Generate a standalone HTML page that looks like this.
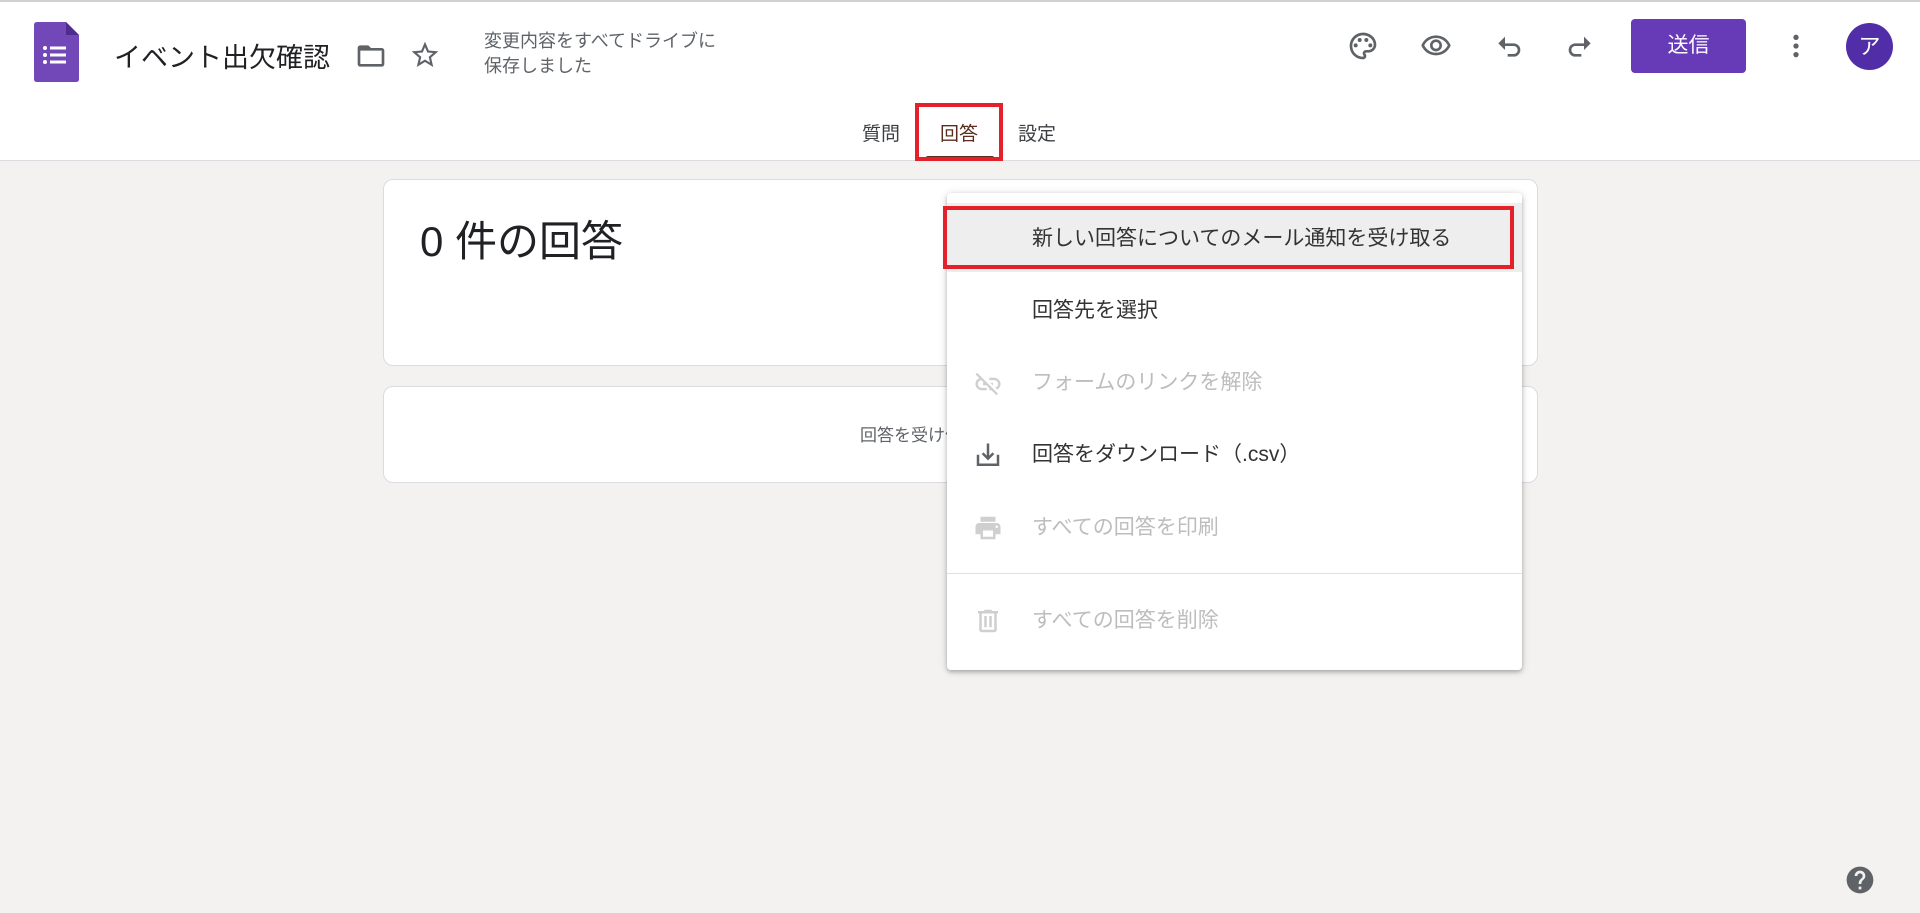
<!DOCTYPE html>
<html><head><meta charset="utf-8">
<style>
*{margin:0;padding:0;box-sizing:border-box}
body{width:1920px;height:913px;background:#f3f2f1;font-family:"Liberation Sans","Noto Sans CJK JP",sans-serif;position:relative;overflow:hidden;color:#202124}
.hdr{position:absolute;left:0;top:0;width:1920px;height:161px;background:#fff;border-top:2px solid #d0d0d0;border-bottom:1px solid #dadce0}
.abs{position:absolute}
.ic{position:absolute;fill:#5f6368}
.card{position:absolute;background:#fff;border:1px solid #dadce0;border-radius:10px}
.menu{position:absolute;left:947px;top:193px;width:575px;height:477px;background:#fff;border-radius:4px;box-shadow:0 2px 4px rgba(0,0,0,.25),0 1px 10px rgba(0,0,0,.12)}
.mi{position:absolute;left:85px;font-size:21px;line-height:28px;color:#333}
.dis{color:#bdbdbd}
</style></head><body>
<div class="hdr"></div>
<svg class="abs" style="left:34px;top:22px" width="45" height="60" viewBox="0 0 45 60"><path d="M3 0H32L45 13V57Q45 60 42 60H3Q0 60 0 57V3Q0 0 3 0Z" fill="#7248b9"/><path d="M32 0L45 13H32Z" fill="#4e2b8f"/><g fill="#fff"><circle cx="11" cy="26" r="2"/><circle cx="11" cy="33" r="2"/><circle cx="11" cy="40" r="2"/><rect x="16" y="24.5" width="16" height="3"/><rect x="16" y="31.5" width="16" height="3"/><rect x="16" y="38.5" width="16" height="3"/></g></svg>
<div class="abs" style="left:114px;top:36px;font-size:27px;color:#202124">イベント出欠確認</div>
<svg class="ic" style="left:355px;top:40px" width="32" height="32" viewBox="0 0 24 24"><path d="M20 6h-8l-2-2H4c-1.1 0-2 .9-2 2v12c0 1.1.9 2 2 2h16c1.1 0 2-.9 2-2V8c0-1.1-.9-2-2-2zm0 12H4V8h16v10z"/></svg>
<svg class="ic" style="left:409px;top:39px" width="32" height="32" viewBox="0 0 24 24"><path d="M22 9.24l-7.19-.62L12 2 9.19 8.63 2 9.24l5.46 4.73L5.82 21 12 17.27 18.18 21l-1.63-7.03L22 9.24zM12 15.4l-3.76 2.27 1-4.28-3.32-2.88 4.38-.38L12 6.1l1.71 4.04 4.38.38-3.32 2.88 1 4.28L12 15.4z"/></svg>
<div class="abs" style="left:484px;top:29px;font-size:18px;line-height:25px;color:#5f6368">変更内容をすべてドライブに<br>保存しました</div>
<svg class="ic" style="left:1347px;top:30px" width="32" height="32" viewBox="0 0 24 24"><path d="M12 22C6.49 22 2 17.51 2 12S6.49 2 12 2s10 4.04 10 9c0 3.31-2.690 6-6 6h-1.770c-.28 0-.5.22-.5.5 0 .12.05.23.13.33.41.47.64 1.06.64 1.67A2.5 2.5 0 0 1 12 22zm0-18c-4.41 0-8 3.590-8 8s3.59 8 8 8c.28 0 .5-.22.5-.5a.54.54 0 0 0-.14-.35c-.41-.46-.63-1.050-.63-1.650a2.5 2.5 0 0 1 2.5-2.5H16c2.21 0 4-1.79 4-4 0-3.86-3.59-7-8-7z"/><circle cx="6.5" cy="11.5" r="1.5"/><circle cx="9.5" cy="7.5" r="1.5"/><circle cx="14.5" cy="7.5" r="1.5"/><circle cx="17.5" cy="11.5" r="1.5"/></svg>
<svg class="ic" style="left:1420px;top:30px" width="32" height="32" viewBox="0 0 24 24"><path d="M12 6c3.79 0 7.17 2.13 8.82 5.5C19.17 14.87 15.79 17 12 17s-7.17-2.13-8.82-5.5C4.83 8.13 8.21 6 12 6m0-2C7 4 2.73 7.11 1 11.5 2.73 15.89 7 19 12 19s9.27-3.11 11-7.5C21.27 7.11 17 4 12 4zm0 5c1.38 0 2.5 1.12 2.5 2.5S13.38 14 12 14s-2.5-1.120-2.5-2.5S10.62 9 12 9m0-2c-2.48 0-4.5 2.02-4.5 4.5S9.52 16 12 16s4.5-2.020 4.5-4.5S14.48 7 12 7z"/></svg>
<svg class="ic" style="left:1493px;top:30px" width="32" height="32" viewBox="0 0 24 24"><path d="M7 8V5L2 10l5 5v-3h6.5a3 3 0 0 1 0 6H9v2h4.5a5 5 0 0 0 0-10H7z" transform="translate(2 0)"/></svg>
<svg class="ic" style="left:1564px;top:30px" width="32" height="32" viewBox="0 0 24 24"><path d="M17 8V5l5 5-5 5v-3h-6.5a3 3 0 0 0 0 6H15v2h-4.5a5 5 0 0 1 0-10H17z" transform="translate(-2 0)"/></svg>
<div class="abs" style="left:1631px;top:19px;width:115px;height:54px;background:#673ab7;border-radius:4px;color:#fff;font-size:21px;line-height:54px;text-align:center">送信</div>
<svg class="ic" style="left:1780px;top:30px" width="32" height="32" viewBox="0 0 24 24"><circle cx="12" cy="5.5" r="2"/><circle cx="12" cy="12" r="2"/><circle cx="12" cy="18.5" r="2"/></svg>
<div class="abs" style="left:1846px;top:23px;width:47px;height:47px;border-radius:50%;background:#512da8;color:#fff;font-size:22px;line-height:47px;text-align:center">ア</div>
<div class="abs" style="left:862px;top:119px;font-size:19px;color:#3c4043">質問</div>
<div class="abs" style="left:940px;top:119px;font-size:19px;color:#5b2c1e">回答</div>
<div class="abs" style="left:1018px;top:119px;font-size:19px;color:#3c4043">設定</div>
<div class="abs" style="left:925px;top:156px;width:70px;height:5px;background:#5b2c1e;border-radius:3px 3px 0 0"></div>
<div class="abs" style="left:915px;top:103px;width:88px;height:58px;border:4px solid #e4202a"></div>
<div class="card" style="left:383px;top:179px;width:1155px;height:187px"></div>
<div class="abs" style="left:420px;top:208px;font-size:42px;color:#202124">0 件の回答</div>
<div class="card" style="left:383px;top:386px;width:1155px;height:97px"></div>
<div class="abs" style="left:860px;top:421px;font-size:17px;color:#5f6368">回答を受け付けています</div>
<div class="menu">
<div class="abs" style="left:0;top:10px;width:575px;height:69px;background:#eee"></div>
<div class="abs" style="left:-4px;top:13px;width:571px;height:63px;border:4px solid #e4202a"></div>
<div class="mi" style="top:32px">新しい回答についてのメール通知を受け取る</div>
<div class="mi" style="top:104px">回答先を選択</div>
<svg class="abs" style="left:26px;top:176px;fill:#cfcfcf" width="30" height="30" viewBox="0 0 24 24"><path d="M17 7h-4v1.9h4c1.71 0 3.1 1.39 3.1 3.1 0 1.43-.98 2.63-2.31 2.98l1.46 1.46C20.88 15.61 22 13.95 22 12c0-2.76-2.24-5-5-5zm-1 4h-2.19l2 2H16v-2zM2 4.27l3.11 3.11A4.991 4.991 0 0 0 2 12c0 2.76 2.24 5 5 5h4v-1.9H7c-1.71 0-3.1-1.39-3.1-3.1 0-1.59 1.21-2.9 2.76-3.07L8.73 11H8v2h2.73L13 15.27V17h1.73l4.01 4L20 19.74 3.27 3 2 4.27z"/></svg>
<div class="mi dis" style="top:176px">フォームのリンクを解除</div>
<svg class="abs" style="left:26px;top:248px;fill:#5f6368" width="30" height="30" viewBox="0 0 24 24"><path d="M19 12v7H5v-7H3v9h18v-9h-2zm-6 .67l2.59-2.58L17 11.5l-5 5-5-5 1.41-1.41L11 12.67V3h2v9.67z" transform="translate(0 -1)"/></svg>
<div class="mi" style="top:248px">回答をダウンロード（.csv）</div>
<svg class="abs" style="left:26px;top:320px;fill:#cfcfcf" width="30" height="30" viewBox="0 0 24 24"><path d="M19 8H5c-1.66 0-3 1.34-3 3v6h4v4h12v-4h4v-6c0-1.66-1.34-3-3-3zm-3 11H8v-5h8v5zm3-7c-.55 0-1-.45-1-1s.45-1 1-1 1 .45 1 1-.45 1-1 1zm-1-9H6v4h12V3z"/></svg>
<div class="mi dis" style="top:321px">すべての回答を印刷</div>
<div class="abs" style="left:0;top:380px;width:575px;height:1px;background:#e0e0e0"></div>
<svg class="abs" style="left:26px;top:413px;fill:#cfcfcf" width="30" height="30" viewBox="0 0 24 24"><path d="M15 4V3H9v1H4v2h1v13c0 1.1.9 2 2 2h10c1.1 0 2-.9 2-2V6h1V4h-5zm2 15H7V6h10v13zM9 8h2v9H9zm4 0h2v9h-2z"/></svg>
<div class="mi dis" style="top:414px">すべての回答を削除</div>
</div>
<svg class="abs" style="left:1844px;top:864px;fill:#5f6368" width="32" height="32" viewBox="0 0 24 24"><path d="M12 2C6.48 2 2 6.48 2 12s4.48 10 10 10 10-4.48 10-10S17.52 2 12 2zm1 17h-2v-2h2v2zm2.07-7.75l-.9.92C13.45 12.9 13 13.5 13 15h-2v-.5c0-1.1.45-2.1 1.17-2.83l1.24-1.26c.37-.36.59-.86.59-1.41 0-1.1-.9-2-2-2s-2 .9-2 2H8c0-2.21 1.79-4 4-4s4 1.79 4 4c0 .88-.36 1.68-.93 2.25z"/></svg>
</body></html>
